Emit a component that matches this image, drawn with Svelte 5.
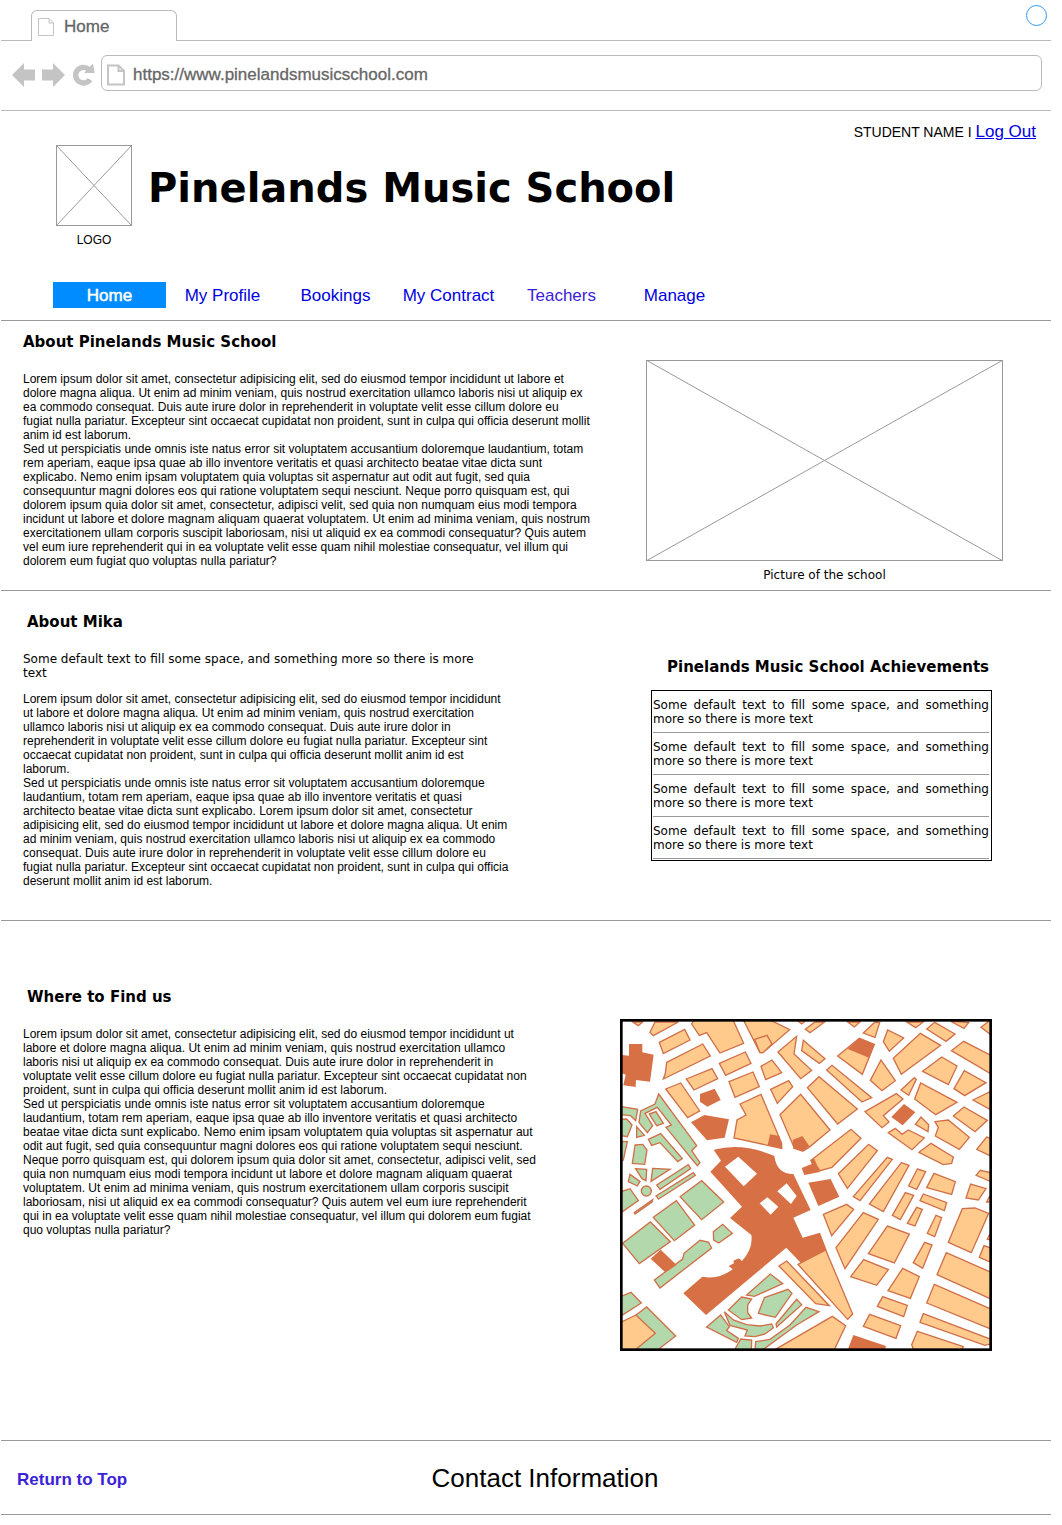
<script>
  let address = $state('https://www.pinelandsmusicschool.com');

  const navItems = [
    { label: 'Home', active: true },
    { label: 'My Profile' },
    { label: 'Bookings' },
    { label: 'My Contract' },
    { label: 'Teachers', visited: true },
    { label: 'Manage' }
  ];

  const achievements = [1, 2, 3, 4];

  const aboutSchool = `Lorem ipsum dolor sit amet, consectetur adipisicing elit, sed do eiusmod tempor incididunt ut labore et
dolore magna aliqua. Ut enim ad minim veniam, quis nostrud exercitation ullamco laboris nisi ut aliquip ex
ea commodo consequat. Duis aute irure dolor in reprehenderit in voluptate velit esse cillum dolore eu
fugiat nulla pariatur. Excepteur sint occaecat cupidatat non proident, sunt in culpa qui officia deserunt mollit
anim id est laborum.
Sed ut perspiciatis unde omnis iste natus error sit voluptatem accusantium doloremque laudantium, totam
rem aperiam, eaque ipsa quae ab illo inventore veritatis et quasi architecto beatae vitae dicta sunt
explicabo. Nemo enim ipsam voluptatem quia voluptas sit aspernatur aut odit aut fugit, sed quia
consequuntur magni dolores eos qui ratione voluptatem sequi nesciunt. Neque porro quisquam est, qui
dolorem ipsum quia dolor sit amet, consectetur, adipisci velit, sed quia non numquam eius modi tempora
incidunt ut labore et dolore magnam aliquam quaerat voluptatem. Ut enim ad minima veniam, quis nostrum
exercitationem ullam corporis suscipit laboriosam, nisi ut aliquid ex ea commodi consequatur? Quis autem
vel eum iure reprehenderit qui in ea voluptate velit esse quam nihil molestiae consequatur, vel illum qui
dolorem eum fugiat quo voluptas nulla pariatur?`;

  const aboutMika = `Lorem ipsum dolor sit amet, consectetur adipisicing elit, sed do eiusmod tempor incididunt
ut labore et dolore magna aliqua. Ut enim ad minim veniam, quis nostrud exercitation
ullamco laboris nisi ut aliquip ex ea commodo consequat. Duis aute irure dolor in
reprehenderit in voluptate velit esse cillum dolore eu fugiat nulla pariatur. Excepteur sint
occaecat cupidatat non proident, sunt in culpa qui officia deserunt mollit anim id est
laborum.
Sed ut perspiciatis unde omnis iste natus error sit voluptatem accusantium doloremque
laudantium, totam rem aperiam, eaque ipsa quae ab illo inventore veritatis et quasi
architecto beatae vitae dicta sunt explicabo. Lorem ipsum dolor sit amet, consectetur
adipisicing elit, sed do eiusmod tempor incididunt ut labore et dolore magna aliqua. Ut enim
ad minim veniam, quis nostrud exercitation ullamco laboris nisi ut aliquip ex ea commodo
consequat. Duis aute irure dolor in reprehenderit in voluptate velit esse cillum dolore eu
fugiat nulla pariatur. Excepteur sint occaecat cupidatat non proident, sunt in culpa qui officia
deserunt mollit anim id est laborum.`;

  const whereToFind = `Lorem ipsum dolor sit amet, consectetur adipisicing elit, sed do eiusmod tempor incididunt ut
labore et dolore magna aliqua. Ut enim ad minim veniam, quis nostrud exercitation ullamco
laboris nisi ut aliquip ex ea commodo consequat. Duis aute irure dolor in reprehenderit in
voluptate velit esse cillum dolore eu fugiat nulla pariatur. Excepteur sint occaecat cupidatat non
proident, sunt in culpa qui officia deserunt mollit anim id est laborum.
Sed ut perspiciatis unde omnis iste natus error sit voluptatem accusantium doloremque
laudantium, totam rem aperiam, eaque ipsa quae ab illo inventore veritatis et quasi architecto
beatae vitae dicta sunt explicabo. Nemo enim ipsam voluptatem quia voluptas sit aspernatur aut
odit aut fugit, sed quia consequuntur magni dolores eos qui ratione voluptatem sequi nesciunt.
Neque porro quisquam est, qui dolorem ipsum quia dolor sit amet, consectetur, adipisci velit, sed
quia non numquam eius modi tempora incidunt ut labore et dolore magnam aliquam quaerat
voluptatem. Ut enim ad minima veniam, quis nostrum exercitationem ullam corporis suscipit
laboriosam, nisi ut aliquid ex ea commodi consequatur? Quis autem vel eum iure reprehenderit
qui in ea voluptate velit esse quam nihil molestiae consequatur, vel illum qui dolorem eum fugiat
quo voluptas nulla pariatur?`;

  // Map shapes, grouped by quadrant; each quadrant is drawn from its own origin.
  const quadrants = [
    {
      name: 'nw',
      blocks: [
        '68,36 85,47 98,36', '135,36 120,67 130,77 205,36', '148,97 224,58 240,90 160,131',
        '170,157 278,102 301,138 160,207 166,190', '167,237 212,219 269,303 233,323',
        '229,207 306,176 323,206 252,240', '245,42 268,76 290,68 330,129 401,100 369,30 252,30',
        '328,160 406,126 423,160 347,196', '357,215 429,186 448,230 375,262',
        '390,282 453,253 515,400 515,415 372,384 381,330 408,315',
        '400,30 450,128 459,128 539,59 480,30', '434,88 471,76 486,102 459,128 450,128',
        '453,169 486,150 515,188 467,209', '482,238 536,212 548,230 502,280',
        '504,126 560,79 552,132 605,181 572,206', '510,314 572,253 660,360 597,412 579,423 552,412',
        '560,30 575,42 590,30'
      ],
      landmarks: [
        '480,373 508,378 517,416 473,406', '548,390 577,378 598,408 578,425 550,416',
        '57,102 97,102 97,127 131,134 120,215 78,210 77,231 40,226 47,194 36,190 36,135 57,137',
        '270,252 314,236 332,270 292,290 270,275', '243,337 283,315 357,328 344,383 291,391'
      ],
      parks: [
        '135,282 146,252 260,407 245,422 270,458 262,467 168,352 184,345 142,292 105,310 128,347 112,368 87,337 92,303',
        '118,312 138,305 160,340 140,347', '30,289 83,298 77,332 62,317 30,314',
        '30,328 50,327 66,345 52,380 30,376', '80,350 103,376 80,382',
        '115,388 152,371 217,446 203,455 150,398 125,406', '75,405 98,403 111,420 104,463 67,460',
        '30,394 52,395 40,450 30,455', '77,476 110,478 108,512 96,506', '128,475 180,478 123,514',
        '60,493 90,514 82,528 55,515', '140,525 235,464 242,476 150,538'
      ]
    },
    {
      name: 'ne',
      blocks: [
        '10,91 75,146 58,160 5,122', '22,233 57,200 172,297 113,342', '16,58 45,36 74,36 30,68',
        '143,36 163,51 180,36', '190,69 225,36 239,38 225,82', '113,138 178,85 223,103 187,193',
        '250,95 263,60 311,84 268,124', '320,36 347,53 370,36', '380,57 404,37 465,72 438,94',
        '450,33 492,55 506,38', '543,52 580,24 580,80', '280,145 361,70 422,106 304,193',
        '211,211 243,150 286,212 246,242', '80,180 96,166 215,263 186,276',
        '368,184 425,141 471,168 445,224', '454,122 491,94 580,140 580,196',
        '462,236 493,182 558,218 494,257', '303,240 343,203 349,208 326,256',
        '344,267 362,219 471,277 407,314', '519,270 580,240 580,304', '460,318 492,291 562,331 525,365',
        '195,305 289,251 309,267 250,317 267,336 246,353', '346,343 363,321 386,344 384,365',
        '265,368 286,355 306,373 325,360 373,384 336,419',
        '405,335 445,330 508,382 478,418 406,378 415,352', '357,427 393,400 460,441 455,460 430,464',
        '530,418 560,381 580,388 580,442', '35,449 153,358 183,385 96,472 60,482',
        '115,491 206,403 232,422 142,535', '262,442 277,448 180,572 160,560',
        '304,458 327,466 250,605 208,582', '352,477 377,485 350,538 326,528',
        '402,490 466,515 455,553 380,533', '528,496 541,481 580,490 580,518'
      ],
      landmarks: [
        '143,117 178,84 223,103 207,143', '274,321 312,282 346,307 308,346',
        '30,450 43,446 60,486 13,495 5,474 35,462', '25,518 92,507 118,560 55,588'
      ],
      parks: []
    },
    {
      name: 'sw',
      blocks: ['507,258 530,243 658,377 617,371', '500,506 667,409 707,437 670,515'],
      landmarks: ['122,236 152,209 200,255 166,277'],
      parks: [
        '138,48 250,-22 256,-14 146,57', '73,98 128,59 126,66 75,102', '30,36 60,26 85,62 30,100',
        '210,50 275,2 341,66 275,119', '130,112 199,62 254,135 193,182', '38,190 121,126 181,185 88,251',
        '133,300 218,237 222,220 270,181 295,186 305,204 150,324', '310,155 338,133 367,160 326,189 311,180',
        '30,351 63,337 94,369 30,410', '78,405 110,381 197,468 140,512 70,512',
        '410,345 481,282 518,311 433,349', '463,353 534,328 546,340 496,412 445,400',
        '355,390 395,351 425,357 413,375 413,398 425,414 395,419',
        '343,395 370,420 410,434 450,438 485,432 490,443 465,462 435,470 405,468 412,450 360,436',
        '290,441 332,405 358,440 350,452 385,475 380,487', '498,432 560,358 575,374 500,441',
        '377,504 392,477 425,480 424,515 377,515',
        '437,485 480,478 540,435 588,382 627,395 560,435 455,512 435,512'
      ]
    },
    {
      name: 'se',
      blocks: [
        '70,103 140,73 161,88 95,167', '108,203 190,98 235,118 135,266', '262,138 328,162 283,249 205,221',
        '277,106 316,38 341,46 301,119', '360,62 370,42 440,68 433,92', '322,130 350,82 367,88 345,138',
        '382,160 408,106 425,113 404,170', '340,248 374,187 396,195 368,265',
        '445,187 487,86 525,84 566,100 514,218', '538,232 552,197 580,207 580,250',
        '411,284 439,218 580,280 580,360', '380,369 403,313 580,390 580,450',
        '360,427 370,401 580,481 580,490 555,496', '335,494 352,454 490,500 480,520 345,520',
        '152,290 191,239 265,269 230,316', '264,332 308,265 358,290 331,355',
        '232,379 248,350 322,376 311,410', '190,439 209,403 302,437 288,475',
        '498,54 512,12 558,26 535,60', '-6,253 77,210 158,402 143,418', '560,66 568,50 580,66',
        '562,178 568,165 580,180'
      ],
      landmarks: ['142,512 160,465 258,498 254,512'],
      parks: []
    }
  ];
</script>

{#snippet placeholder(w, h)}
  <svg class="placeholder" viewBox="0 0 {w} {h}" width={w} height={h} aria-hidden="true">
    <rect x=".5" y=".5" width={w - 1} height={h - 1} />
    <path d="M0 0L{w} {h}M{w} 0L0 {h}" />
  </svg>
{/snippet}

<div class="page" id="top">
  <div class="tabs">
    <div class="tab">
      <svg width="16" height="20" viewBox="0 0 16 20" class="doc" aria-hidden="true">
        <path d="M.5 1.5H11L15.500 6V18.500H.5ZM11 1.500V6H15.500" />
      </svg>
      <span>Home</span>
    </div>
    <button class="ring" aria-label="Window menu"></button>
  </div>

  <div class="toolbar">
    <button class="tool" aria-label="Back">
      <svg width="24" height="26" viewBox="0 0 24 26"><path d="M0 13L12 1V7.500H23V18.500H12V25Z" /></svg>
    </button>
    <button class="tool" aria-label="Forward">
      <svg width="24" height="26" viewBox="0 0 24 26"><path d="M23 13L11 1V7.500H0V18.500H11V25Z" /></svg>
    </button>
    <button class="tool" aria-label="Reload">
      <svg width="24" height="26" viewBox="0 0 24 26">
        <path class="arc" d="M17 7.700A7.800 7.800 0 1 0 18 17.500" />
        <path d="M21 1.500L22.600 11H12Z" />
      </svg>
    </button>
    <label class="address">
      <svg width="18" height="22" viewBox="0 0 18 22" class="doc bold" aria-hidden="true">
        <path d="M1 1.500H11.500L17 7V20.500H1ZM11.500 1.500V7H17" />
      </svg>
      <input type="text" aria-label="Address" bind:value={address} />
    </label>
  </div>

  <header>
    <div class="account">STUDENT NAME I <a href="#logout">Log Out</a></div>
    <div class="brand">
      <figure class="logo">
        {@render placeholder(76, 81)}
        <figcaption>LOGO</figcaption>
      </figure>
      <h1>Pinelands Music School</h1>
    </div>
    <nav>
      {#each navItems as item}
        <a href="#top" class:active={item.active} class:visited={item.visited}>{item.label}</a>
      {/each}
    </nav>
  </header>

  <section class="school">
    <div class="copy">
      <h2>About Pinelands Music School</h2>
      <p class="body">{aboutSchool}</p>
    </div>
    <figure class="photo">
      {@render placeholder(357, 201)}
      <figcaption>Picture of the school</figcaption>
    </figure>
  </section>

  <section class="mika">
    <div class="copy">
      <h2>About Mika</h2>
      <p class="intro">Some default text to fill some space, and something more so there is more text</p>
      <p class="body">{aboutMika}</p>
    </div>
    <div class="achievements">
      <h2>Pinelands Music School Achievements</h2>
      <ul>
        {#each achievements as id (id)}
          <li>Some default text to fill some space, and something more so there is more text</li>
        {/each}
      </ul>
    </div>
  </section>

  <section class="find">
    <div class="copy">
      <h2>Where to Find us</h2>
      <p class="body">{whereToFind}</p>
    </div>
    <svg class="map" viewBox="30 27 1116 996" role="img" aria-label="Street map">
      {#each quadrants as q}
        <g class={q.name}>
          {#each q.parks as points}<polygon class="park" {points} />{/each}
          {#each q.blocks as points}<polygon class="block" {points} />{/each}
          {#each q.landmarks as points}<polygon class="landmark" {points} />{/each}
        </g>
      {/each}
      <polygon class="block" points="30,938 78,915 136,970 75,1020 30,1020" />
      <circle class="park" cx="109" cy="543" r="15" />
      <path
        class="landmark"
        fill-rule="evenodd"
        d="M311 419Q400 397 493 438Q500 492 550 492L602 600L550 623L578 683L630 668L650 720L572 758L529 713L288 915L220 850L277 800Q325 810 368 778L356 768L372 760L370 752L387 745L396 753Q430 715 424 675L360 624L396 590L301 485L333 452Z
           M345 470L401 529L441 491L385 440ZM449 580L482 614L505 590L472 562ZM502 544L543 582L560 558L530 520Z"
      />
      <rect class="frame" x="34" y="31" width="1108" height="988" />
    </svg>
  </section>

  <footer>
    <a href="#top">Return to Top</a>
    <h2>Contact Information</h2>
  </footer>
</div>

<style>
  :global(body) {
    margin: 0;
    background: #fff;
  }
  .page {
    padding: 0 11px 0 1px;
    font-family: 'Liberation Sans', Arial, sans-serif;
    font-size: 12px;
    line-height: 14px;
    color: #000;
  }
  h1, h2, p, figure, ul {
    margin: 0;
    padding: 0;
  }
  svg {
    display: block;
    flex: none;
  }
  button {
    padding: 0;
    border: 0;
    background: none;
  }
  .tabs {
    display: flex;
    justify-content: space-between;
    height: 40px;
    padding: 0 4px 0 30px;
    border-bottom: 1px solid #bbb;
  }
  .tab {
    display: flex;
    align-items: center;
    gap: 10px;
    box-sizing: border-box;
    width: 146px;
    height: 31px;
    margin-top: 10px;
    padding-top: 2px;
    padding-left: 6px;
    border: 1px solid #bbb;
    border-bottom: 0;
    border-radius: 6px 6px 0 0;
    background: #fff;
    color: #666;
    font-size: 17px;
    -webkit-text-stroke: 0.3px #666;
  }
  .doc {
    fill: none;
    stroke: #c4c4c4;
  }
  .doc.bold {
    stroke-width: 2;
  }
  .ring {
    box-sizing: border-box;
    width: 21px;
    height: 21px;
    margin-top: 5px;
    border: 1px solid #3399f0;
    border-radius: 50%;
  }
  .toolbar {
    display: flex;
    align-items: center;
    height: 36px;
    padding: 14px 9px 19px 11px;
    border-bottom: 1px solid #bbb;
  }
  .tool {
    margin-right: 6px;
    padding-top: 3px;
    fill: #c4c4c4;
  }
  .arc {
    fill: none;
    stroke: #c4c4c4;
    stroke-width: 5.4;
  }
  .address {
    display: flex;
    flex: 1;
    align-items: center;
    gap: 8px;
    box-sizing: border-box;
    height: 36px;
    margin-left: -1px;
    padding-top: 3px;
    padding-left: 5px;
    border: 1px solid #bbb;
    border-radius: 6px;
  }
  .address input {
    flex: 1;
    min-width: 0;
    padding: 0;
    border: 0;
    outline: 0;
    background: none;
    color: #666;
    font: 17px 'Liberation Sans', Arial, sans-serif;
    -webkit-text-stroke: 0.3px #666;
  }
  header {
    padding: 11px 0 12px;
    border-bottom: 1px solid #999;
  }
  .account {
    padding-right: 15px;
    font-size: 14px;
    line-height: 20px;
    text-align: right;
  }
  .account a {
    color: #0000e0;
    font-size: 17px;
  }
  .brand {
    display: flex;
    gap: 16px;
    padding: 3px 0 35px 55px;
  }
  .logo {
    text-align: center;
  }
  .logo figcaption {
    margin-top: 7px;
  }
  .placeholder {
    fill: none;
    stroke: #999;
  }
  h1 {
    font: bold 40px/48px Verdana, 'DejaVu Sans', sans-serif;
    margin-top: 19px;
  }
  nav {
    display: flex;
    padding-left: 52px;
  }
  nav a {
    box-sizing: border-box;
    width: 113px;
    padding-top: 2px;
    color: #0000e0;
    font-size: 17px;
    line-height: 24px;
    text-align: center;
    text-decoration: none;
  }
  nav a.visited {
    color: #3b22d8;
  }
  nav a.active {
    background: #008cff;
    color: #fff;
    -webkit-text-stroke: 0.5px #fff;
  }
  section {
    display: flex;
    justify-content: space-between;
    box-sizing: border-box;
    padding-left: 22px;
    border-bottom: 1px solid #999;
  }
  h2 {
    font: bold 15px/18px Verdana, 'DejaVu Sans', sans-serif;
  }
  .body {
    white-space: pre-line;
  }
  .copy h2 {
    margin-bottom: 21px;
  }
  .school {
    min-height: 270px;
    padding-top: 12px;
    padding-right: 48px;
  }
  .photo {
    margin-top: 27px;
    text-align: center;
  }
  figcaption {
    margin-top: 7px;
  }
  .photo figcaption,
  .intro,
  li {
    font-family: Verdana, 'DejaVu Sans', sans-serif;
  }
  .mika {
    min-height: 330px;
    padding-top: 22px;
    padding-right: 59px;
  }
  .mika .copy h2,
  .find .copy h2 {
    padding-left: 4px;
  }
  .intro {
    max-width: 460px;
    margin-bottom: 12px;
  }
  .mika .copy h2 {
    margin-bottom: 20px;
    padding-bottom: 1px;
  }
  .mika .intro {
    margin-bottom: 12px;
  }
  .achievements {
    width: 341px;
    margin-top: 45px;
  }
  .achievements h2 {
    padding-right: 3px;
    text-align: right;
    white-space: nowrap;
  }
  ul {
    margin-top: 14px;
    padding: 0 2px 1px 1px;
    border: 1px solid #000;
    list-style: none;
  }
  li {
    padding: 7px 0 6px;
    border-bottom: 1px solid #999;
    text-align: justify;
  }
  .find {
    min-height: 520px;
    padding-top: 67px;
    padding-right: 59px;
  }
  .map {
    width: 372px;
    height: 332px;
    margin-top: 31px;
  }
  .ne {
    transform: translate(570px, 0);
  }
  .sw {
    transform: translate(0, 510px);
  }
  .se {
    transform: translate(570px, 510px);
  }
  .block,
  .park {
    stroke: #cf7049;
    stroke-width: 4;
  }
  .block {
    fill: #ffca8c;
  }
  .park {
    fill: #b2d8ac;
  }
  .landmark {
    fill: #d87045;
  }
  .frame {
    fill: none;
    stroke: #000;
    stroke-width: 8;
  }
  footer {
    display: grid;
    grid-template-columns: 1fr auto 1fr;
    align-items: center;
    height: 73px;
    padding-left: 38px;
    border-bottom: 1px solid #999;
  }
  footer a {
    margin-left: -22px;
    padding-top: 4px;
    color: #3b22d8;
    font-size: 17px;
    font-weight: bold;
    text-decoration: none;
  }
  footer h2 {
    font: 26px/30px 'Liberation Sans', Arial, sans-serif;
  }
</style>
